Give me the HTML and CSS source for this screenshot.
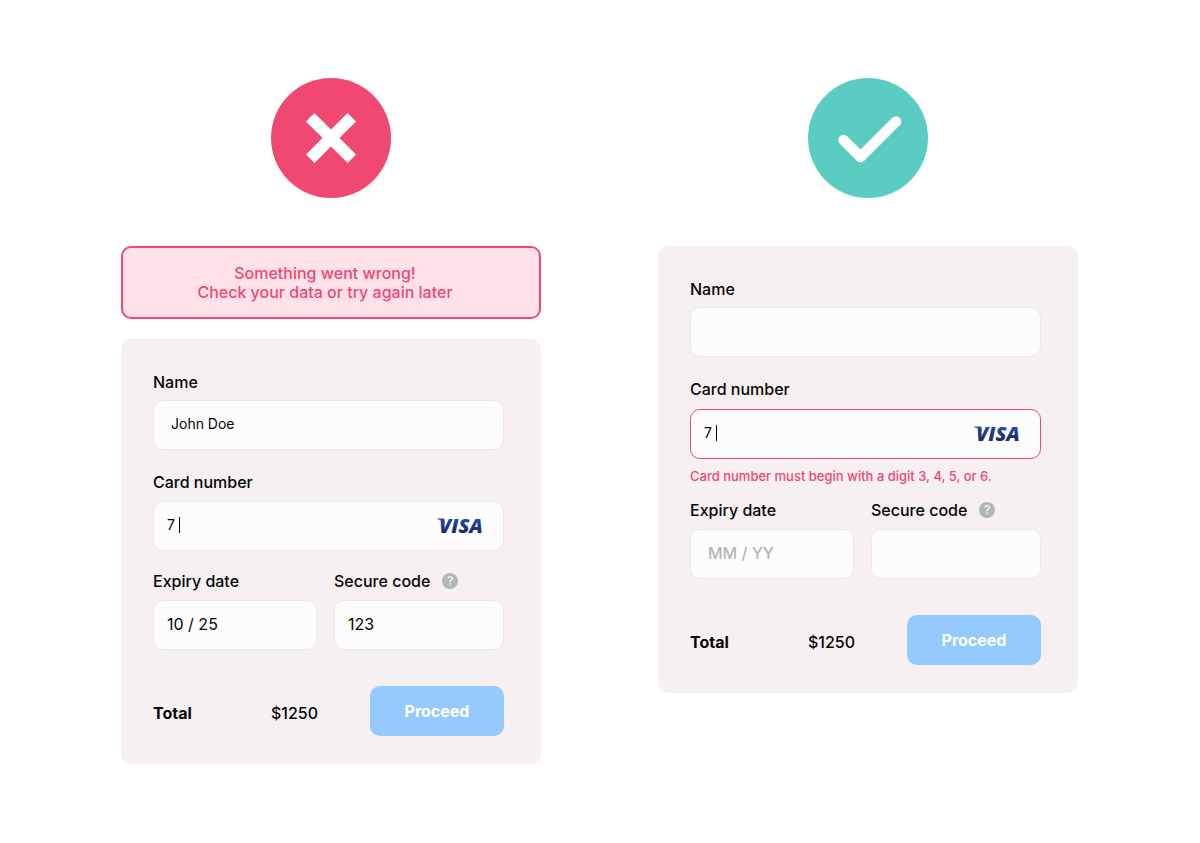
FILE: index.html
```html
<!DOCTYPE html>
<html lang="en">
<head>
<meta charset="utf-8">
<meta name="viewport" content="width=device-width, initial-scale=1">
<title>Payment form validation</title>
<link rel="stylesheet" href="styles.css">
</head>
<body>
<main class="comparison">
  <section class="example">
    <svg class="verdict" viewBox="0 0 120 120" role="img" aria-label="Incorrect">
      <circle cx="60" cy="60" r="60" fill="#f04870"/>
      <path d="M39.200 39.200 80.800 80.800M80.800 39.200 39.200 80.800" stroke="#fff" stroke-width="12"/>
    </svg>
    <p class="alert" role="alert">Something went wrong!<br>Check your data or try again later</p>
    <form class="card">
      <div class="field">
        <label class="label" for="name-a">Name</label>
        <input class="input input-name" id="name-a" type="text" value="John Doe">
      </div>
      <div class="field field-number">
        <label class="label" for="number-a">Card number</label>
        <div class="control">
          <input class="input input-number" id="number-a" type="text" value="7">
          <span class="caret"></span>
          <svg class="visa" viewBox="0 0 56 30" role="img" aria-label="Visa">
            <defs><linearGradient id="visa-a" x1="0" y1="0" x2="0" y2="1"><stop offset="0.2" stop-color="#2450a8"/><stop offset="0.8" stop-color="#20255f"/></linearGradient></defs>
            <path d="M5 7.500H12L13 13Q10 9 5 8Z" fill="#2450a4"/>
            <text class="visa-text" x="7" y="22" fill="url(#visa-a)">VISA</text>
          </svg>
        </div>
      </div>
      <div class="pair">
        <div class="field">
          <label class="label" for="expiry-a">Expiry date</label>
          <input class="input" id="expiry-a" type="text" value="10 / 25">
        </div>
        <div class="field">
          <div class="label-row">
            <label class="label" for="code-a">Secure code</label>
            <button class="help" type="button" aria-label="About the secure code">?</button>
          </div>
          <input class="input" id="code-a" type="text" value="123">
        </div>
      </div>
      <div class="summary">
        <strong class="total">Total</strong>
        <span class="amount">$1250</span>
        <button class="proceed" type="button">Proceed</button>
      </div>
    </form>
  </section>

  <section class="example">
    <svg class="verdict" viewBox="0 0 120 120" role="img" aria-label="Correct">
      <circle cx="60" cy="60" r="60" fill="#5bccc2"/>
      <path d="M35.500 62 52.500 79 88 43.500" fill="none" stroke="#fff" stroke-width="10.500" stroke-linecap="round" stroke-linejoin="round"/>
    </svg>
    <form class="card">
      <div class="field">
        <label class="label" for="name-b">Name</label>
        <input class="input input-name" id="name-b" type="text">
      </div>
      <div class="field field-invalid">
        <label class="label" for="number-b">Card number</label>
        <div class="control">
          <input class="input input-number" id="number-b" type="text" value="7" aria-invalid="true" aria-describedby="number-error">
          <span class="caret"></span>
          <svg class="visa" viewBox="0 0 56 30" role="img" aria-label="Visa">
            <defs><linearGradient id="visa-b" x1="0" y1="0" x2="0" y2="1"><stop offset="0.2" stop-color="#2450a8"/><stop offset="0.8" stop-color="#20255f"/></linearGradient></defs>
            <path d="M5 7.500H12L13 13Q10 9 5 8Z" fill="#2450a4"/>
            <text class="visa-text" x="7" y="22" fill="url(#visa-b)">VISA</text>
          </svg>
        </div>
        <p class="error" id="number-error">Card number must begin with a digit 3, 4, 5, or 6.</p>
      </div>
      <div class="pair">
        <div class="field">
          <label class="label" for="expiry-b">Expiry date</label>
          <input class="input input-hint" id="expiry-b" type="text" placeholder="MM / YY">
        </div>
        <div class="field">
          <div class="label-row">
            <label class="label" for="code-b">Secure code</label>
            <button class="help" type="button" aria-label="About the secure code">?</button>
          </div>
          <input class="input" id="code-b" type="text">
        </div>
      </div>
      <div class="summary">
        <strong class="total">Total</strong>
        <span class="amount">$1250</span>
        <button class="proceed" type="button">Proceed</button>
      </div>
    </form>
  </section>
</main>
</body>
</html>
```
FILE: styles.css
```css
* {
  box-sizing: border-box;
}

body {
  margin: 0;
  background: #fff;
  color: #050505;
  font-family: Inter, "Liberation Sans", sans-serif;
  font-size: 16px;
  line-height: 20px;
}

input,
button {
  font: inherit;
}

.comparison {
  display: grid;
  grid-template-columns: 1fr 1fr;
  align-items: start;
  gap: 117px;
  padding: 78px 122px 78px 121px;
}

.example {
  display: flex;
  flex-direction: column;
}

.verdict {
  width: 120px;
  height: 120px;
  margin-bottom: 48px;
  align-self: center;
}

.alert {
  margin: 0 0 20px;
  padding: 16px 28px 15px 16px;
  border: 2px solid #f04870;
  border-radius: 10px;
  background: #ffe1e9;
  color: #f04870;
  font-weight: 500;
  line-height: 19px;
  text-align: center;
}

.card {
  padding: 33px 37px 28px 32px;
  border-radius: 10px;
  background: #f6f0f3;
}

.field {
  display: flex;
  flex-direction: column;
  gap: 8px;
  margin-bottom: 22px;
}

.field-number {
  gap: 9px;
  margin-bottom: 20px;
}

.field-invalid {
  gap: 10px;
  margin-bottom: 16px;
}

.label {
  font-weight: 500;
}

.label-row {
  display: flex;
  align-items: center;
  gap: 12px;
}

.input {
  width: 100%;
  height: 50px;
  padding: 0 13px 2px;
  border: 1px solid #ebe8ea;
  border-radius: 10px;
  background: #fcfcfc;
  color: #050505;
  outline: none;
}

.input::placeholder {
  color: #b2b6b6;
  opacity: 1;
}

.input-name {
  padding: 0 17px 4px;
  font-size: 14px;
}

.input-number {
  padding: 0 80px 4px 13px;
  font-size: 14px;
}

.input-hint {
  padding: 0 17px 2px;
  font-weight: 500;
}

.field-invalid .input {
  border-color: #f04870;
}

.control {
  position: relative;
}

.caret {
  position: absolute;
  top: 16px;
  left: 26px;
  width: 1px;
  height: 16px;
  background: #050505;
}

.visa {
  position: absolute;
  top: 10px;
  right: 16px;
  width: 56px;
  height: 30px;
}

.visa-text {
  font-family: "Open Sans", sans-serif;
  font-size: 20px;
  font-style: italic;
  font-weight: 800;
}

.help {
  width: 16px;
  height: 16px;
  padding: 0;
  border: 0;
  border-radius: 50%;
  background: #b2b6b6;
  color: #f6f0f3;
  font-size: 12px;
  font-weight: 600;
  line-height: 16px;
}

.error {
  margin: 0;
  color: #f04870;
  font-size: 13px;
  font-weight: 500;
  line-height: 15px;
}

.pair {
  display: grid;
  grid-template-columns: 164fr 170fr;
  gap: 17px;
}

.pair .field {
  gap: 9px;
  margin-bottom: 36px;
}

.summary {
  display: grid;
  grid-template-columns: 118fr 99fr 134px;
  align-items: center;
}

.total {
  padding-top: 4px;
  font-weight: 700;
}

.amount {
  padding-top: 4px;
  font-weight: 500;
}

.proceed {
  height: 50px;
  padding: 0;
  border: 0;
  border-radius: 10px;
  background: #95caff;
  color: #fff;
  font-weight: 700;
}
```
